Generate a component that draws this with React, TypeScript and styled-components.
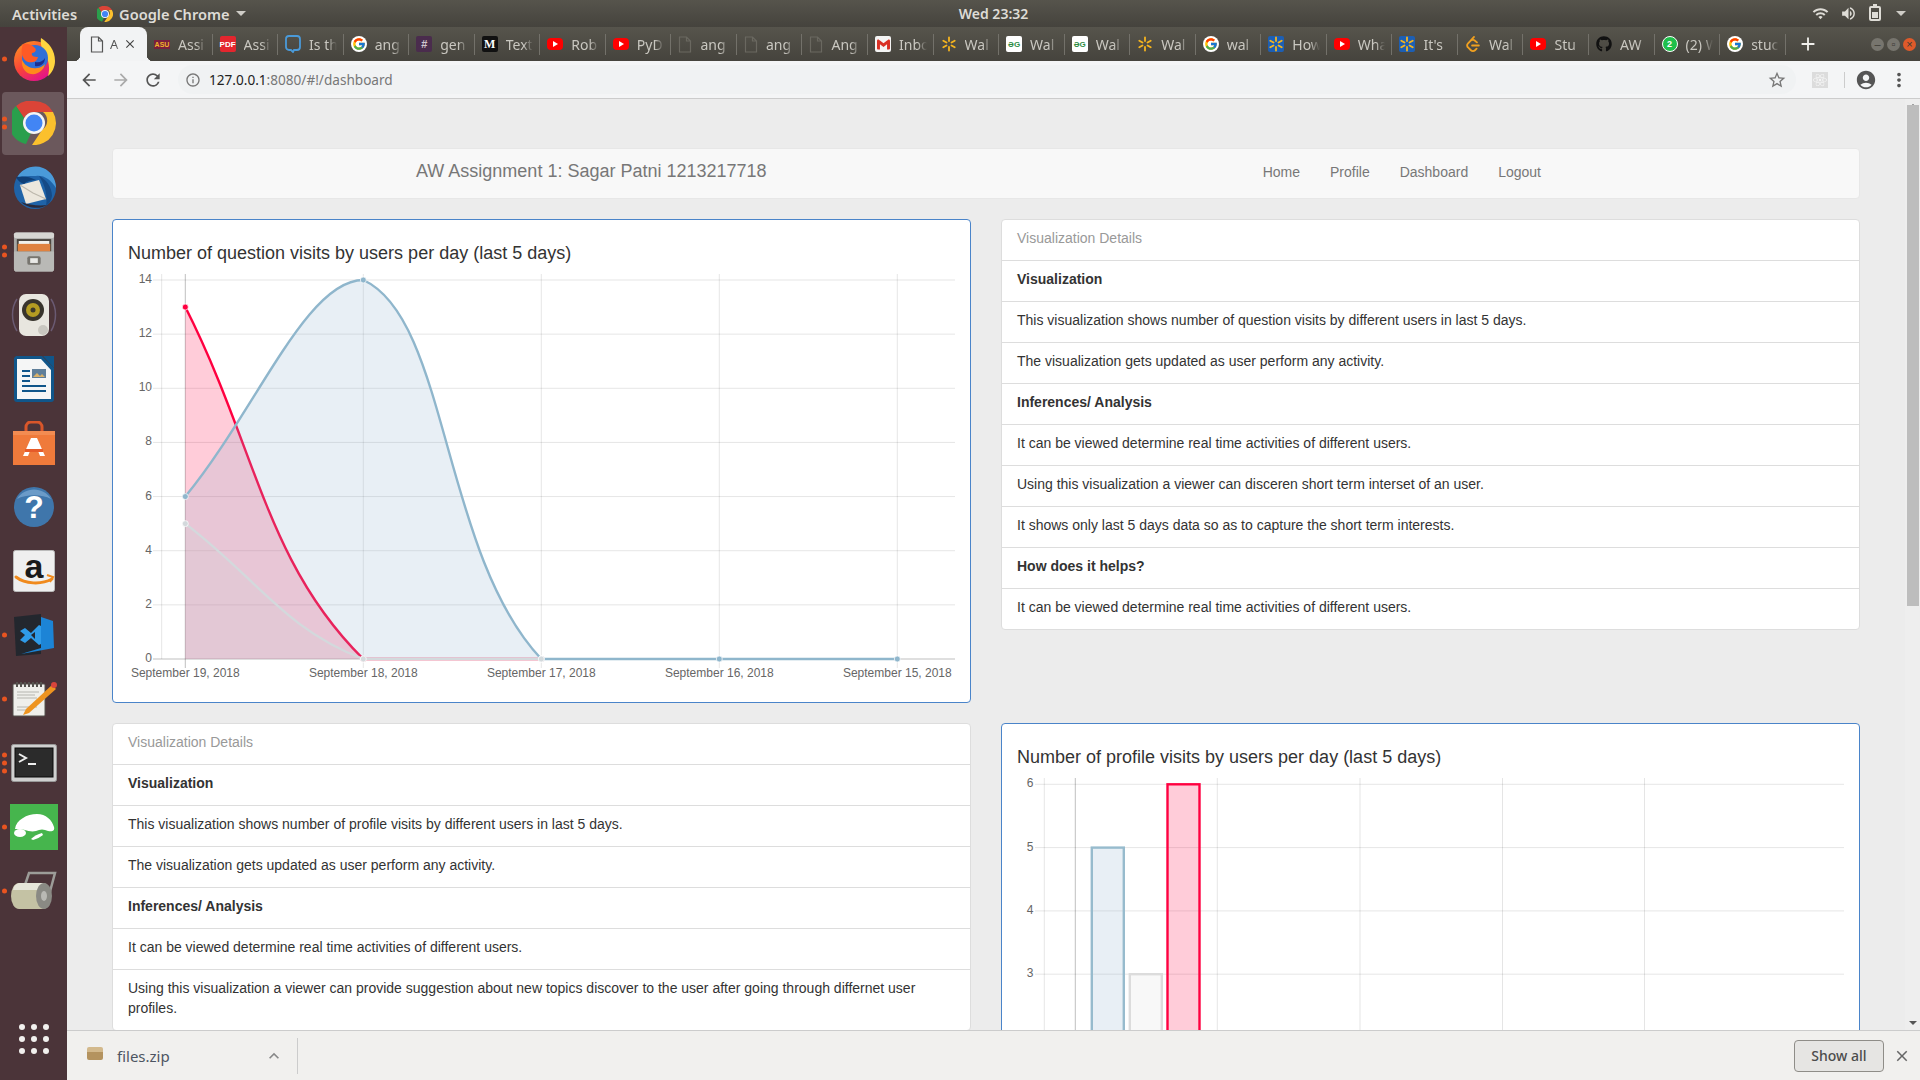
import React from "react";
import styled, { createGlobalStyle } from "styled-components";
import { FcGoogle } from "react-icons/fc";
import { FaGithub, FaReact } from "react-icons/fa";
import { SiGmail, SiLeetcode } from "react-icons/si";
import {
  MdAccountCircle,
  MdAdd,
  MdArrowBack,
  MdArrowForward,
  MdClose,
  MdExpandLess,
  MdInfoOutline,
  MdMoreVert,
  MdRefresh,
  MdStarBorder,
  MdVolumeUp,
  MdWifi,
} from "react-icons/md";

const GlobalStyle = createGlobalStyle`
  html, body {
    margin: 0;
    padding: 0;
    overflow: hidden;
    background: #ececec;
  }
  * { box-sizing: border-box; }
`;

const Screen = styled.div`
  width: 1920px;
  height: 1080px;
  display: flex;
  flex-direction: column;
  overflow: hidden;
  font-family: "Liberation Sans", Arial, sans-serif;
`;

/* ---------- ubuntu top bar ---------- */

const TopBar = styled.div`
  height: 27px;
  flex: none;
  display: grid;
  grid-template-columns: 1fr auto 1fr;
  align-items: center;
  padding: 0 12px;
  background: linear-gradient(#56544c, #45433d);
  color: #dedcd6;
  font: 600 14.6px "Noto Sans", sans-serif;
`;

const TopLeft = styled.div`
  display: flex;
  align-items: center;
`;

const AppMenu = styled.div`
  display: flex;
  align-items: center;
  gap: 6px;
  margin-left: 20px;
`;

const Caret = styled.span`
  width: 0;
  height: 0;
  border-left: 5px solid transparent;
  border-right: 5px solid transparent;
  border-top: 5px solid #cfcdc7;
`;

const Clock = styled.div`
  margin-left: 67px;
  font-size: 14px;
`;

const TopRight = styled.div`
  display: flex;
  align-items: center;
  justify-content: flex-end;
  gap: 11px;
  padding-right: 2px;
  color: #dedcd6;
`;

const Battery = styled.span`
  position: relative;
  width: 12px;
  height: 15px;
  border: 2px solid #dedcd6;
  border-radius: 2px;
  margin: 0 4px 0 1px;
  &::before {
    content: "";
    position: absolute;
    left: 2px;
    top: -4px;
    width: 4px;
    height: 2px;
    background: #dedcd6;
  }
  &::after {
    content: "";
    position: absolute;
    left: 1px;
    right: 1px;
    bottom: 1px;
    height: 6px;
    background: #dedcd6;
  }
`;

/* ---------- dock ---------- */

const Body = styled.div`
  flex: 1;
  min-height: 0;
  display: flex;
`;

const Dock = styled.div`
  width: 67px;
  flex: none;
  display: flex;
  flex-direction: column;
  background: #4b3439;
`;

const DockItem = styled.div<{ $active?: boolean }>`
  position: relative;
  height: 64px;
  flex: none;
  display: flex;
  align-items: center;
  justify-content: center;
  &::before {
    content: "";
    display: ${({ $active }) => ($active ? "block" : "none")};
    position: absolute;
    left: 2px;
    right: 3px;
    top: 1px;
    bottom: 0;
    border-radius: 4px;
    background: rgba(255, 255, 255, 0.18);
  }
  svg {
    position: relative;
  }
`;

const RunDots = styled.div`
  position: absolute;
  left: 2px;
  top: 50%;
  transform: translateY(-50%);
  display: flex;
  flex-direction: column;
  gap: 3px;
`;

const RunDot = styled.span`
  width: 5px;
  height: 5px;
  border-radius: 50%;
  background: #e95420;
`;

const AppGrid = styled.div`
  margin-top: auto;
  margin-bottom: 26px;
  align-self: center;
  display: grid;
  grid-template-columns: repeat(3, 6px);
  gap: 6px;
`;

const AppGridDot = styled.span`
  width: 6px;
  height: 6px;
  border-radius: 50%;
  background: #f2f0ee;
`;

const DockLabel = styled.text`
  font-family: "Liberation Sans", sans-serif;
  font-weight: 700;
`;

const chromeShape = (
  <>
    <path d="M22 0a22 22 0 0 1 19 11H22a11 11 0 0 0-10 6L4 5A22 22 0 0 1 22 0z" fill="#db4437" />
    <path d="M4 5l8 12-1 2a11 11 0 0 0 8 13l-5 11A22 22 0 0 1 4 5z" fill="#2a9f4c" />
    <path d="M41 11a22 22 0 0 1-21 33l10-15a11 11 0 0 0 1-18z" fill="#fbc02d" />
    <circle cx="22" cy="22" r="11" fill="#f5f5f5" />
    <circle cx="22" cy="22" r="8.5" fill="#4285f4" />
  </>
);

const icons: Record<string, React.ReactNode> = {
  firefox: (
    <svg width="46" height="46" viewBox="0 0 46 46">
      <defs>
        <linearGradient id="ffx" x1="0" y1="0" x2="0.6" y2="1">
          <stop offset="0" stopColor="#ff9a1f" />
          <stop offset="0.6" stopColor="#f9423a" />
          <stop offset="1" stopColor="#e31587" />
        </linearGradient>
      </defs>
      <circle cx="23" cy="25" r="20" fill="url(#ffx)" />
      <path d="M30 2c8 5 14 12 14 23 0 6-3 12-7 15 2-7 1-16-3-22-3-5-5-10-4-16z" fill="#ffd53f" />
      <circle cx="24" cy="22" r="13" fill="#2f6fd8" />
      <path d="M11 24c3 6 9 9 15 8 3 0 6-2 8-4-1 6-7 11-14 10C14 37 10 31 11 24z" fill="#ff8a1c" />
      <path d="M12 8c5-1 9 1 12 4 2 2 0 5-3 5-1 3 2 4 6 4-1 5-6 6-10 5-6-2-8-11-5-18z" fill="#ff5a26" />
      <path d="M24 26c5 1 8-1 10-4 0 6-5 9-10 8z" fill="#1c2f8f" />
    </svg>
  ),
  chrome: <svg width="44" height="44" viewBox="0 0 44 44">{chromeShape}</svg>,
  thunderbird: (
    <svg width="46" height="46" viewBox="0 0 46 46">
      <circle cx="24" cy="24" r="21" fill="#1f63a8" />
      <path d="M6 14C10 5 22 0 32 4c8 3 13 11 13 20-5-8-12-13-20-12C17 12 11 12 6 14z" fill="#4a9ad9" />
      <path d="M9 21l19-5 7 19-20 5z" fill="#ece7dd" />
      <path d="M9 21l13 8 13 6" fill="none" stroke="#bdb8ad" strokeWidth="1.2" />
      <path d="M28 12c7 3 13 11 13 20-1 5-3 8-6 10 2-10-1-21-7-30z" fill="#164a86" />
      <path d="M5 13c6-1 13-1 20 3-5 0-9 1-12 4-3-1-6-3-8-7z" fill="#0f3f77" />
      <path d="M10 38c6 6 18 8 26 3-8 1-18 0-26-3z" fill="#2b2a3a" />
    </svg>
  ),
  files: (
    <svg width="42" height="43" viewBox="0 0 44 44">
      <rect x="1" y="2" width="42" height="41" rx="3" fill="#a9a9a7" />
      <rect x="1" y="2" width="42" height="6" rx="2" fill="#d6d6d3" />
      <rect x="4" y="9" width="36" height="13" fill="#4a4640" />
      <rect x="6" y="11" width="32" height="4" fill="#f0f0ec" />
      <rect x="5" y="14" width="34" height="8" fill="#df8240" />
      <path d="M1 22h42v18a3 3 0 0 1-3 3H4a3 3 0 0 1-3-3z" fill="#b9b9b6" />
      <rect x="15" y="27" width="14" height="9" rx="2" fill="#77756f" />
      <rect x="18" y="29" width="8" height="5" fill="#e9e9e6" />
    </svg>
  ),
  speaker: (
    <svg width="48" height="44" viewBox="0 0 48 44">
      <path d="M7 6C1 15 1 28 7 38M41 6c6 9 6 22 0 32" fill="none" stroke="#6a5a72" strokeWidth="1.5" />
      <rect x="9" y="1" width="30" height="42" rx="7" fill="#e8e6df" />
      <circle cx="23" cy="17" r="11" fill="#38342c" />
      <circle cx="23" cy="17" r="7" fill="#b49c22" />
      <circle cx="23" cy="17" r="2.5" fill="#3d3a2a" />
      <circle cx="33" cy="37" r="5" fill="#c9c7c0" />
    </svg>
  ),
  writer: (
    <svg width="40" height="46" viewBox="0 0 40 46">
      <path d="M2 0h26l12 12v31a3 3 0 0 1-3 3H3a3 3 0 0 1-3-3V2z" fill="#10568a" />
      <path d="M3 3h24l10 11v29H3z" fill="#f5f6f6" />
      <path d="M29 0l11 12V0z" fill="#10568a" />
      <rect x="8" y="14" width="8" height="2" fill="#10568a" />
      <rect x="8" y="19" width="8" height="2" fill="#10568a" />
      <rect x="8" y="24" width="8" height="2" fill="#10568a" />
      <rect x="8" y="29" width="24" height="2" fill="#10568a" />
      <rect x="8" y="34" width="24" height="2" fill="#10568a" />
      <rect x="18" y="13" width="14" height="9" fill="#5f7f9a" />
      <path d="M19 21l4-4 3 3 2-2 3 3z" fill="#d9b26a" />
    </svg>
  ),
  appstore: (
    <svg width="42" height="44" viewBox="0 0 42 44">
      <path d="M13 12V6a5 5 0 0 1 5-5h6a5 5 0 0 1 5 5v6" fill="none" stroke="#d9562a" strokeWidth="3" />
      <rect x="0" y="10" width="42" height="34" fill="#ef7a3b" />
      <rect x="0" y="10" width="42" height="4" fill="#f28c52" />
      <path d="M18 17h6l8 18h-5l-2-5h-8l-2 5h-5z" fill="#fff" />
      <rect x="12" y="28" width="18" height="3" fill="#e65b2a" />
    </svg>
  ),
  help: (
    <svg width="40" height="44" viewBox="0 0 40 44">
      <circle cx="20" cy="22" r="20" fill="#3f76ab" />
      <path d="M3 14a20 20 0 0 1 34 0c-9-5-25-5-34 0z" fill="#6b9bc8" />
      <DockLabel x="20" y="33" fontSize="32" fill="#fff" textAnchor="middle">?</DockLabel>
    </svg>
  ),
  amazon: (
    <svg width="42" height="42" viewBox="0 0 42 42">
      <rect x="0.5" y="0.5" width="41" height="41" rx="2" fill="#efefef" stroke="#bbb" />
      <DockLabel x="21" y="28" fontSize="34" fill="#1a1a1a" textAnchor="middle">a</DockLabel>
      <path d="M3 27c9 7 25 8 36 2" fill="none" stroke="#f08a1d" strokeWidth="3" strokeLinecap="round" />
      <path d="M34 25l6 2-3 5" fill="none" stroke="#f08a1d" strokeWidth="2" />
    </svg>
  ),
  vscode: (
    <svg width="42" height="42" viewBox="0 0 42 42">
      <path d="M1 3l27-3 0 40-25 2z" fill="#23272e" />
      <path d="M28 3l12 4 1 27-33 6 20-6z" fill="#1c84d6" />
      <path d="M7 17l5-3 6 5 8-8 2 1v18l-2 1-8-7-6 5-5-3 5-5z" fill="#2f9be8" />
      <path d="M22 18l-4 3 4 4z" fill="#23272e" />
    </svg>
  ),
  editor: (
    <svg width="46" height="36" viewBox="0 0 46 36">
      <rect x="2" y="3" width="32" height="32" rx="1" fill="#efefeb" stroke="#55524e" />
      <path d="M6 1v5M10 1v5M14 1v5M18 1v5M22 1v5M26 1v5M30 1v5" stroke="#55524e" strokeWidth="2" />
      <path d="M6 11h22M6 14h18M6 17h20M6 26h20M6 29h14" stroke="#b5b5b0" strokeWidth="1.2" />
      <path d="M41 4l4 4-27 24-6 2 3-6z" fill="#ee9420" />
      <circle cx="43" cy="4" r="3" fill="#d8453c" />
    </svg>
  ),
  terminal: (
    <svg width="46" height="38" viewBox="0 0 46 38">
      <rect x="0.5" y="0.5" width="45" height="37" rx="2" fill="#cfcfcf" stroke="#999" />
      <rect x="4" y="4" width="38" height="29" fill="#2b2b2b" stroke="#0b0b0b" />
      <path d="M8 10l7 4-7 4" fill="none" stroke="#eee" strokeWidth="2" />
      <rect x="17" y="19" width="8" height="2" fill="#eee" />
    </svg>
  ),
  green: (
    <svg width="48" height="46" viewBox="0 0 48 46">
      <rect width="48" height="46" fill="#46b54d" />
      <path d="M5 25C6 16 17 10 27 10c9 0 15 6 17 13 1 4-2 5-6 4-4-2-8-2-12 0-4 1-8 0-11-1-3-1-7-1-10-1z" fill="#fff" />
      <ellipse cx="10" cy="29" rx="6" ry="4" fill="#fff" />
      <path d="M21 35c3-3 7-5 11-6l1 2c-3 2-6 4-10 5z" fill="#fff" />
    </svg>
  ),
  roller: (
    <svg width="46" height="40" viewBox="0 0 46 40">
      <path d="M14 14L18 2h26l-7 26" fill="none" stroke="#9c9c98" strokeWidth="2.5" />
      <path d="M8 12h24a8 13 0 0 1 0 26H8a8 13 0 0 1 0-26z" fill="#c4c2a4" />
      <path d="M8 12h24a8 8 0 0 1 1 7H2a8 8 0 0 1 6-7z" fill="#e6e5d9" />
      <ellipse cx="33" cy="25" rx="8" ry="13" fill="#8a8a84" />
      <ellipse cx="33" cy="25" rx="3" ry="5" fill="#b9b9b4" />
    </svg>
  ),
};

const dockApps = [
  { icon: "firefox", dots: 1 },
  { icon: "chrome", dots: 2, active: true },
  { icon: "thunderbird", dots: 0 },
  { icon: "files", dots: 2 },
  { icon: "speaker", dots: 0 },
  { icon: "writer", dots: 0 },
  { icon: "appstore", dots: 0 },
  { icon: "help", dots: 0 },
  { icon: "amazon", dots: 0 },
  { icon: "vscode", dots: 1 },
  { icon: "editor", dots: 1 },
  { icon: "terminal", dots: 3 },
  { icon: "green", dots: 1 },
  { icon: "roller", dots: 1 },
];

/* ---------- browser chrome ---------- */

const Browser = styled.div`
  flex: 1;
  min-width: 0;
  display: flex;
  flex-direction: column;
`;

const TabStrip = styled.div`
  height: 34px;
  flex: none;
  display: flex;
  align-items: stretch;
  padding-left: 13px;
  background: linear-gradient(#56544c, #45433d);
`;

const ActiveTab = styled.div`
  position: relative;
  width: 67px;
  flex: none;
  display: flex;
  align-items: center;
  gap: 6px;
  padding-left: 10px;
  background: #f2f3f4;
  border-radius: 8px 8px 0 0;
  color: #555;
  font: 13px "Noto Sans", sans-serif;
  &::before,
  &::after {
    content: "";
    position: absolute;
    bottom: 0;
    width: 6px;
    height: 6px;
  }
  &::before {
    left: -6px;
    background: radial-gradient(circle at 0 0, transparent 6px, #f2f3f4 6.5px);
  }
  &::after {
    right: -6px;
    background: radial-gradient(circle at 100% 0, transparent 6px, #f2f3f4 6.5px);
  }
`;

const ActiveLabel = styled.span`
  width: 12px;
  flex: none;
  overflow: hidden;
  white-space: nowrap;
  -webkit-mask-image: linear-gradient(to right, #000 50%, transparent);
  mask-image: linear-gradient(to right, #000 50%, transparent);
`;

const TabClose = styled.span`
  display: flex;
  flex: none;
  margin: 0 10px 0 -5px;
  font-size: 14px;
  color: #444;
`;

const Tab = styled.div`
  width: 65.55px;
  flex: none;
  position: relative;
  display: flex;
  align-items: center;
  gap: 8px;
  padding: 0 7px;
  overflow: hidden;
  color: #c9c7c0;
  font: 14px "Noto Sans", sans-serif;
  &::after {
    content: "";
    position: absolute;
    right: 0;
    top: 7px;
    bottom: 6px;
    width: 1px;
    background: #73716a;
  }
`;

const TabLabel = styled.span`
  flex: 1;
  min-width: 0;
  overflow: hidden;
  white-space: nowrap;
  -webkit-mask-image: linear-gradient(to right, #000 65%, transparent);
  mask-image: linear-gradient(to right, #000 65%, transparent);
`;

const Favicon = styled.span<{ $bg?: string; $color?: string; $round?: boolean; $size?: number }>`
  width: 16px;
  height: 16px;
  flex: none;
  display: flex;
  align-items: center;
  justify-content: center;
  border-radius: ${({ $round }) => ($round ? "50%" : "2px")};
  background: ${({ $bg }) => $bg || "transparent"};
  color: ${({ $color }) => $color || "#fff"};
  font: 700 ${({ $size }) => $size || 8}px "Liberation Sans", sans-serif;
`;

const YouTubeBadge = styled(Favicon)`
  height: 12px;
  border-radius: 4px;
`;

const AsuBadge = styled(Favicon)`
  height: 9px;
  border-radius: 0;
`;

const MediumBadge = styled(Favicon)`
  font-family: "Liberation Serif", serif;
`;

const WhatsappBadge = styled(Favicon)`
  border: 1.5px solid #fff;
`;

const NewTab = styled.div`
  width: 44px;
  display: flex;
  align-items: center;
  justify-content: center;
  color: #f0efeb;
  font-size: 22px;
`;

const WindowButtons = styled.div`
  margin-left: auto;
  padding-right: 4px;
  display: flex;
  align-items: center;
  gap: 3px;
`;

const WindowButton = styled.span<{ $close?: boolean }>`
  width: 13px;
  height: 13px;
  border-radius: 50%;
  display: flex;
  align-items: center;
  justify-content: center;
  background: ${({ $close }) => ($close ? "#df5a2a" : "#77756e")};
  color: #3c3a35;
  font-size: 11px;
`;

const Toolbar = styled.div`
  height: 38px;
  flex: none;
  display: flex;
  align-items: center;
  padding: 0 0 0 6px;
  background: #f4f5f6;
  border-bottom: 1px solid #ccc;
  color: #555;
`;

const NavButton = styled.span<{ $muted?: boolean }>`
  width: 32px;
  display: flex;
  justify-content: center;
  color: ${({ $muted }) => ($muted ? "#aaa" : "#555")};
  font-size: 20px;
`;

const Omnibox = styled.div`
  height: 29px;
  width: 1618px;
  margin-left: 9px;
  display: flex;
  align-items: center;
  gap: 8px;
  padding: 0 9px 0 7px;
  border-radius: 15px;
  background: #f0f2f3;
  font-size: 14px;
  color: #777;
`;

const UrlHost = styled.span`
  color: #222;
`;

const UrlText = styled.span`
  flex: 1;
  font-family: "Noto Sans", sans-serif;
  font-size: 13.6px;
`;

const ToolIcons = styled.div`
  display: flex;
  align-items: center;
  color: #555;
  font-size: 22px;
`;

const ExtensionBox = styled.span`
  width: 16px;
  height: 16px;
  margin-left: 16px;
  display: flex;
  align-items: center;
  justify-content: center;
  background: #dcdcdc;
  color: #f5f5f5;
  font-size: 14px;
`;

const ToolDivider = styled.span`
  width: 1px;
  height: 16px;
  margin: 0 10px 0 16px;
  background: #ccc;
`;

const Kebab = styled.span`
  display: flex;
  margin-left: 11px;
  font-size: 22px;
`;

/* ---------- page ---------- */

const Viewport = styled.div`
  flex: 1;
  min-height: 0;
  display: flex;
  overflow: hidden;
  background: #ececec;
`;

const Page = styled.div`
  width: 1838px;
  flex: none;
  padding: 49px 45px 0;
`;

const Navbar = styled.nav`
  height: 51px;
  margin-bottom: 20px;
  display: flex;
  justify-content: center;
  background: #f8f8f8;
  border: 1px solid #e7e7e7;
  border-radius: 4px;
  color: #777;
`;

const NavInner = styled.div`
  width: 1170px;
  display: flex;
  align-items: center;
  justify-content: space-between;
  padding: 0 15px 4px;
`;

const Brand = styled.span`
  font-size: 18px;
`;

const NavLinks = styled.div`
  display: flex;
  gap: 30px;
  padding-right: 15px;
  font-size: 14px;
`;

const Columns = styled.div`
  display: grid;
  grid-template-columns: 859px 859px;
  column-gap: 30px;
  row-gap: 20px;
  align-items: start;
`;

const ChartCard = styled.section`
  height: 484px;
  padding: 15px 15px 0;
  background: #fff;
  border: 1px solid #4a84c9;
  border-radius: 4px;
`;

const ChartTitle = styled.h4`
  margin: 8px 0 7px;
  font-size: 18px;
  font-weight: 400;
  line-height: 20px;
  color: #333;
`;

const ChartSvg = styled.svg`
  display: block;
`;

const AxisText = styled.text`
  font-family: "Liberation Sans", sans-serif;
  font-size: 12px;
  fill: #666;
`;

const ListCard = styled.section`
  background: #fff;
  border: 1px solid #ddd;
  border-radius: 4px;
  font-size: 14px;
  line-height: 20px;
  color: #333;
`;

const ListRow = styled.div<{ $head?: boolean; $strong?: boolean }>`
  padding: 8px 15px 12px;
  border-top: 1px solid #ddd;
  font-weight: ${({ $strong }) => ($strong ? 700 : 400)};
  color: ${({ $head }) => ($head ? "#999" : "#333")};
  &:first-child {
    border-top: 0;
  }
`;

const Scrollbar = styled.div`
  width: 15px;
  flex: none;
  position: relative;
  display: flex;
  flex-direction: column;
  align-items: center;
  justify-content: space-between;
  padding: 5px 0;
  background: #eee;
`;

const ScrollThumb = styled.div`
  position: absolute;
  left: 2px;
  right: 1px;
  top: 6px;
  height: 501px;
  background: #bdbdbd;
`;

const ScrollArrow = styled.span<{ $down?: boolean }>`
  width: 0;
  height: 0;
  border-left: 4px solid transparent;
  border-right: 4px solid transparent;
  border-${({ $down }) => ($down ? "top" : "bottom")}: 4px solid #555;
`;

/* ---------- download bar ---------- */

const DownloadBar = styled.div`
  height: 50px;
  flex: none;
  display: flex;
  align-items: center;
  background: #f1f0ee;
  border-top: 1px solid #ccc;
`;

const DownloadItem = styled.div`
  width: 231px;
  height: 36px;
  display: flex;
  align-items: center;
  padding-left: 20px;
  border-right: 1px solid #ccc;
`;

const BoxIcon = styled.span`
  width: 16px;
  height: 13px;
  margin-top: -4px;
  border-radius: 2px;
  background: linear-gradient(#d3b98c 40%, #b4935f 40%);
`;

const FileName = styled.span`
  margin-left: 14px;
  flex: 1;
  font: 15px "Noto Sans", sans-serif;
  color: #4d5562;
`;

const Chevron = styled.span`
  display: flex;
  margin-right: 13px;
  color: #888;
  font-size: 20px;
`;

const ShowAll = styled.button`
  width: 90px;
  height: 32px;
  margin-left: auto;
  padding: 0;
  background: #e6e5e3;
  border: 1px solid #8f8d88;
  border-radius: 4px;
  color: #4c4c4c;
  font: 500 14px "Noto Sans", sans-serif;
`;

const CloseBar = styled.span`
  width: 36px;
  display: flex;
  justify-content: center;
  color: #666;
  font-size: 18px;
`;

/* ---------- data ---------- */

const Spark = ({ color = "#f5b41e" }: { color?: string }) => (
  <svg width="16" height="16" viewBox="0 0 16 16">
    {[0, 60, 120, 180, 240, 300].map((a) => (
      <rect key={a} x="7.1" y="0.5" width="1.8" height="5.5" rx="0.9" fill={color} transform={`rotate(${a} 8 8)`} />
    ))}
  </svg>
);

const DocIcon = ({ color = "#6a6860" }: { color?: string }) => (
  <svg width="14" height="17" viewBox="0 0 14 17" style={{ flex: "none" }}>
    <path d="M1.5 1h7l4 4v11h-11z M8.5 1v4h4" fill="none" stroke={color} strokeWidth="1.2" />
  </svg>
);

const favicons: Record<string, React.ReactNode> = {
  asu: <AsuBadge $bg="#7a1f3d" $color="#f0b429" $size={7}>ASU</AsuBadge>,
  pdf: <Favicon $bg="#e3262e">PDF</Favicon>,
  chat: (
    <svg width="16" height="18" viewBox="0 0 16 18">
      <path d="M4 1h8a3 3 0 0 1 3 3v8a3 3 0 0 1-3 3H9l-1 2-2-2H4a3 3 0 0 1-3-3V4a3 3 0 0 1 3-3z" fill="none" stroke="#4a9ad9" strokeWidth="1.8" />
    </svg>
  ),
  google: <Favicon $bg="#fff" $round $size={14}><FcGoogle /></Favicon>,
  hash: <Favicon $bg="#4a2c4d" $color="#cfc6cf" $size={11}>#</Favicon>,
  medium: <MediumBadge $bg="#111" $size={12}>M</MediumBadge>,
  yt: (
    <YouTubeBadge $bg="#f00">
      <svg width="6" height="6" viewBox="0 0 6 6"><path d="M1 0l5 3-5 3z" fill="#fff" /></svg>
    </YouTubeBadge>
  ),
  doc: <DocIcon />,
  gmail: <Favicon $bg="#f4f4f4" $color="#d93025" $size={13}><SiGmail /></Favicon>,
  walmart: <Spark />,
  gfg: <Favicon $bg="#fff" $color="#2f8d46">ƏG</Favicon>,
  walmartBlue: <Favicon $bg="#1d5fb4"><Spark /></Favicon>,
  leetcode: <Favicon $color="#f0a020" $size={16}><SiLeetcode /></Favicon>,
  github: <Favicon $color="#111" $size={16}><FaGithub /></Favicon>,
  whatsapp: <WhatsappBadge $bg="#1fbf4b" $round $size={9}>2</WhatsappBadge>,
};

const tabs = [
  ["asu", "Assi"], ["pdf", "Assi"], ["chat", "Is th"], ["google", "ang"], ["hash", "gen"],
  ["medium", "Text"], ["yt", "Rob"], ["yt", "PyD"], ["doc", "ang"], ["doc", "ang"],
  ["doc", "Ang"], ["gmail", "Inbo"], ["walmart", "Wal"], ["gfg", "Wal"], ["gfg", "Wal"],
  ["walmart", "Wal"], ["google", "wal"], ["walmartBlue", "How"], ["yt", "Wha"], ["walmartBlue", "It's"],
  ["leetcode", "Wal"], ["yt", "Stu"], ["github", "AW"], ["whatsapp", "(2) W"], ["google", "stuc"],
];

const rightRows: [string, boolean?][] = [
  ["Visualization", true],
  ["This visualization shows number of question visits by different users in last 5 days."],
  ["The visualization gets updated as user perform any activity."],
  ["Inferences/ Analysis", true],
  ["It can be viewed determine real time activities of different users."],
  ["Using this visualization a viewer can disceren short term interset of an user."],
  ["It shows only last 5 days data so as to capture the short term interests."],
  ["How does it helps?", true],
  ["It can be viewed determine real time activities of different users."],
];

const leftRows: [string, boolean?][] = [
  ["Visualization", true],
  ["This visualization shows number of profile visits by different users in last 5 days."],
  ["The visualization gets updated as user perform any activity."],
  ["Inferences/ Analysis", true],
  ["It can be viewed determine real time activities of different users."],
  ["Using this visualization a viewer can provide suggestion about new topics discover to the user after going through differnet user profiles."],
];

const DetailsList = ({ rows }: { rows: [string, boolean?][] }) => (
  <ListCard>
    <ListRow $head>Visualization Details</ListRow>
    {rows.map(([text, strong], i) => (
      <ListRow key={i} $strong={strong}>{text}</ListRow>
    ))}
  </ListCard>
);

/* ---------- charts ---------- */

const GRID = "rgba(0,0,0,0.1)";
const DARK = "rgba(0,0,0,0.25)";
const CHART_W = 827;
const CHART_H = 413;

const lineTop = 10;
const lineBottom = 389;
const lineX = (i: number) => 57.3 + i * 178;
const lineY = (v: number) => lineBottom - (v / 14) * (lineBottom - lineTop);

type Pt = { x: number; y: number };

// same control points chart.js uses for tension 0.4, capped to the chart area
const splinePath = (pts: Pt[]) => {
  const clamp = (v: number) => Math.min(lineBottom, Math.max(lineTop, v));
  const ctrl = pts.map((p, i) => {
    const a = pts[i - 1] || p;
    const b = pts[i + 1] || p;
    const d01 = Math.hypot(p.x - a.x, p.y - a.y);
    const d12 = Math.hypot(b.x - p.x, b.y - p.y);
    const total = d01 + d12 || 1;
    const fa = (0.4 * d01) / total;
    const fb = (0.4 * d12) / total;
    return {
      px: p.x - fa * (b.x - a.x),
      py: clamp(p.y - fa * (b.y - a.y)),
      nx: p.x + fb * (b.x - a.x),
      ny: clamp(p.y + fb * (b.y - a.y)),
    };
  });
  let d = `M${pts[0].x} ${pts[0].y}`;
  for (let i = 1; i < pts.length; i++) {
    d += ` C${ctrl[i - 1].nx} ${ctrl[i - 1].ny} ${ctrl[i].px} ${ctrl[i].py} ${pts[i].x} ${pts[i].y}`;
  }
  return d;
};

// drawn back to front: blue sits over the red, grey over both
const lineSeries = [
  { data: [13, 0, 0], color: "#ff0040", fill: "rgba(255,0,64,0.2)" },
  { data: [6, 14, 0, 0, 0], color: "#8fb6cc", fill: "rgba(140,175,205,0.2)" },
  { data: [5, 0, 0], color: "#d3d9dc", fill: "rgba(210,210,210,0.2)" },
];

const dates = [
  "September 19, 2018",
  "September 18, 2018",
  "September 17, 2018",
  "September 16, 2018",
  "September 15, 2018",
];

const QuestionChart = () => (
  <ChartSvg width={CHART_W} height={CHART_H} viewBox={`0 0 ${CHART_W} ${CHART_H}`}>
    {[0, 2, 4, 6, 8, 10, 12, 14].map((v) => (
      <g key={v}>
        <line x1="25" x2={CHART_W} y1={lineY(v)} y2={lineY(v)} stroke={v === 0 ? DARK : GRID} />
        <AxisText x="24" y={lineY(v) + 3} textAnchor="end">{v}</AxisText>
      </g>
    ))}
    <line x1="33.7" x2="33.7" y1="4" y2={lineBottom} stroke={GRID} />
    {dates.map((label, i) => (
      <g key={label}>
        <line x1={lineX(i)} x2={lineX(i)} y1="4" y2="398" stroke={i === 0 ? DARK : GRID} />
        <AxisText x={lineX(i)} y="407" textAnchor="middle">{label}</AxisText>
      </g>
    ))}
    {lineSeries.map((s) => {
      const pts = s.data.map((v, i) => ({ x: lineX(i), y: lineY(v) }));
      const path = splinePath(pts);
      const last = pts[pts.length - 1];
      return (
        <g key={s.color}>
          <path d={`${path} L${last.x} ${lineBottom} L${pts[0].x} ${lineBottom} Z`} fill={s.fill} />
          <path d={path} fill="none" stroke={s.color} strokeWidth="2.4" />
          {pts.map((p) => (
            <circle key={p.x} cx={p.x} cy={p.y} r="3" fill={s.color} stroke="#fff" strokeOpacity="0.7" />
          ))}
        </g>
      );
    })}
  </ChartSvg>
);

const barTop = 10.3;
const barUnit = 63.3;
const barY = (v: number) => barTop + (6 - v) * barUnit;
const barBottom = barY(0);

const bars = [
  { x: 74.8, value: 5, color: "#97bbcd", fill: "rgba(140,175,205,0.2)" },
  { x: 112.8, value: 3, color: "#dcdcdc", fill: "rgba(220,220,220,0.2)" },
  { x: 150.5, value: 6, color: "#ff0040", fill: "rgba(255,0,64,0.2)" },
];

const ProfileChart = () => (
  <ChartSvg width={CHART_W} height={CHART_H} viewBox={`0 0 ${CHART_W} ${CHART_H}`}>
    {[0, 1, 2, 3, 4, 5, 6].map((v) => (
      <g key={v}>
        <line x1="18" x2={CHART_W} y1={barY(v)} y2={barY(v)} stroke={v === 0 ? DARK : GRID} />
        <AxisText x="16.5" y={barY(v) + 3} textAnchor="end">{v}</AxisText>
      </g>
    ))}
    {[27.3, 200.3, 343, 485.5, 627.5].map((x) => (
      <line key={x} x1={x} x2={x} y1="4" y2={barBottom} stroke={GRID} />
    ))}
    <line x1="58.3" x2="58.3" y1="4" y2={barBottom} stroke={DARK} />
    {bars.map((b) => (
      <rect
        key={b.x}
        x={b.x}
        y={barY(b.value)}
        width="32"
        height={barBottom - barY(b.value)}
        fill={b.fill}
        stroke={b.color}
        strokeWidth="2.4"
      />
    ))}
  </ChartSvg>
);

const App: React.FC = () => (
  <Screen>
    <GlobalStyle />
    <TopBar>
      <TopLeft>
        Activities
        <AppMenu>
          <svg width="16" height="16" viewBox="0 0 44 44">{chromeShape}</svg>
          Google Chrome
          <Caret />
        </AppMenu>
      </TopLeft>
      <Clock>Wed 23:32</Clock>
      <TopRight>
        <MdWifi size={17} />
        <MdVolumeUp size={17} />
        <Battery />
        <Caret />
      </TopRight>
    </TopBar>
    <Body>
      <Dock>
        {dockApps.map((app) => (
          <DockItem key={app.icon} $active={app.active}>
            {icons[app.icon]}
            {app.dots > 0 && (
              <RunDots>
                {Array.from({ length: app.dots }).map((_, i) => (
                  <RunDot key={i} />
                ))}
              </RunDots>
            )}
          </DockItem>
        ))}
        <AppGrid>
          {Array.from({ length: 9 }).map((_, i) => (
            <AppGridDot key={i} />
          ))}
        </AppGrid>
      </Dock>
      <Browser>
        <TabStrip>
          <ActiveTab>
            <DocIcon color="#555" />
            <ActiveLabel>A</ActiveLabel>
            <TabClose><MdClose /></TabClose>
          </ActiveTab>
          {tabs.map(([icon, label], i) => (
            <Tab key={i}>
              {favicons[icon]}
              <TabLabel>{label}</TabLabel>
            </Tab>
          ))}
          <NewTab><MdAdd /></NewTab>
          <WindowButtons>
            <WindowButton>–</WindowButton>
            <WindowButton>▫</WindowButton>
            <WindowButton $close>×</WindowButton>
          </WindowButtons>
        </TabStrip>
        <Toolbar>
          <NavButton><MdArrowBack /></NavButton>
          <NavButton $muted><MdArrowForward /></NavButton>
          <NavButton><MdRefresh /></NavButton>
          <Omnibox>
            <MdInfoOutline size={16} />
            <UrlText><UrlHost>127.0.0.1</UrlHost>:8080/#!/dashboard</UrlText>
            <MdStarBorder size={20} />
          </Omnibox>
          <ToolIcons>
            <ExtensionBox><FaReact /></ExtensionBox>
            <ToolDivider />
            <MdAccountCircle size={22} />
            <Kebab><MdMoreVert /></Kebab>
          </ToolIcons>
        </Toolbar>
        <Viewport>
          <Page>
            <Navbar>
              <NavInner>
                <Brand>AW Assignment 1: Sagar Patni 1213217718</Brand>
                <NavLinks>
                  <span>Home</span>
                  <span>Profile</span>
                  <span>Dashboard</span>
                  <span>Logout</span>
                </NavLinks>
              </NavInner>
            </Navbar>
            <Columns>
              <ChartCard>
                <ChartTitle>Number of question visits by users per day (last 5 days)</ChartTitle>
                <QuestionChart />
              </ChartCard>
              <DetailsList rows={rightRows} />
              <DetailsList rows={leftRows} />
              <ChartCard>
                <ChartTitle>Number of profile visits by users per day (last 5 days)</ChartTitle>
                <ProfileChart />
              </ChartCard>
            </Columns>
          </Page>
          <Scrollbar>
            <ScrollArrow />
            <ScrollThumb />
            <ScrollArrow $down />
          </Scrollbar>
        </Viewport>
        <DownloadBar>
          <DownloadItem>
            <BoxIcon />
            <FileName>files.zip</FileName>
            <Chevron><MdExpandLess /></Chevron>
          </DownloadItem>
          <ShowAll>Show all</ShowAll>
          <CloseBar><MdClose /></CloseBar>
        </DownloadBar>
      </Browser>
    </Body>
  </Screen>
);

export default App;
